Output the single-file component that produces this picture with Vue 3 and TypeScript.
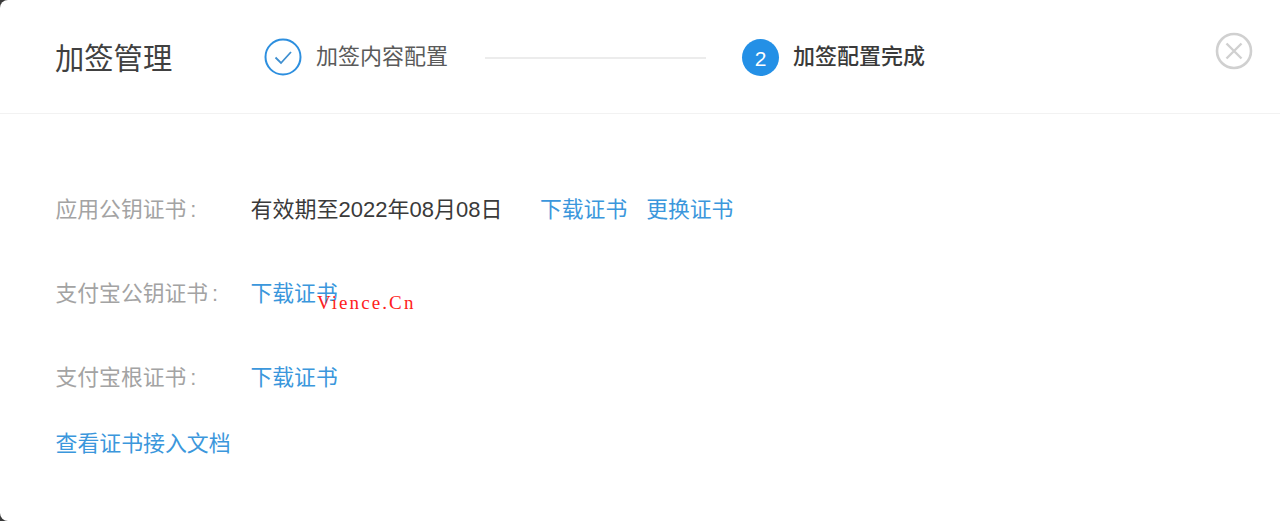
<script setup lang="ts">
const rows = [
  { label: '应用公钥证书', text: '有效期至2022年08月08日', links: ['下载证书', '更换证书'] },
  { label: '支付宝公钥证书', text: '', links: ['下载证书'] },
  { label: '支付宝根证书', text: '', links: ['下载证书'] },
]
</script>

<template>
  <div class="modal">
    <header class="head">
      <h1 class="title">加签管理</h1>
      <div class="steps">
        <div class="step">
          <svg class="ico" width="38" height="38" viewBox="0 0 38 38">
            <circle cx="19" cy="19" r="17.5" fill="none" stroke="#2d8fdf" stroke-width="2" />
            <path d="M11.5 19.5l5.5 5.5 10-11" fill="none" stroke="#3f8fd0" stroke-width="1.8" />
          </svg>
          <span class="step-text">加签内容配置</span>
        </div>
        <div class="line"></div>
        <div class="step">
          <span class="num">2</span>
          <span class="step-text active">加签配置完成</span>
        </div>
      </div>
      <button class="close" aria-label="关闭">
        <svg width="38" height="38" viewBox="0 0 38 38">
          <circle cx="19" cy="19" r="17" fill="none" stroke="#d0d0d0" stroke-width="2.6" />
          <path d="M11.5 11.5l15 15M26.5 11.5l-15 15" fill="none" stroke="#d0d0d0" stroke-width="2.4" />
        </svg>
      </button>
    </header>
    <main class="body">
      <div v-for="r in rows" :key="r.label" class="row">
        <span class="label">{{ r.label }}<span class="colon">:</span></span>
        <span v-if="r.text" class="value">{{ r.text }}</span>
        <a v-for="l in r.links" :key="l" class="link">{{ l }}</a>
      </div>
      <a class="link doc">查看证书接入文档</a>
    </main>
    <span class="mark">Vience.Cn</span>
  </div>
</template>

<style>
html, body { margin: 0; background: #3a3a3a; }
</style>

<style scoped>
.modal {
  position: relative;
  width: 1280px;
  height: 521px;
  overflow: hidden;
  background: #fff;
  border-radius: 8px 0 0 8px;
  font-family: "Liberation Sans", "Noto Sans CJK SC", sans-serif;
}
.head {
  display: flex;
  align-items: flex-start;
  height: 114px;
  box-sizing: border-box;
  border-bottom: 1px solid #f2f2f2;
  padding-left: 55px;
}
.title {
  margin: 0;
  width: 209px;
  padding-top: 39px;
  font-size: 29.3px;
  line-height: 40px;
  font-weight: 400;
  color: #404040;
}
.steps {
  display: flex;
  align-items: center;
  height: 38px;
  margin-top: 38px;
}
.step { display: flex; align-items: center; gap: 14px; }
.ico { flex: none; }
.step-text { font-size: 22px; line-height: 38px; height: 38px; color: #5a5a5a; }
.step-text.active { color: #3a3a3a; font-weight: 500; }
.line { width: 221px; height: 2px; background: #ececec; margin: 1px 36px 0 37px; }
.num {
  width: 37px;
  height: 37px;
  border-radius: 50%;
  background: #2490e6;
  color: #fff;
  font: 21px/40px "Liberation Sans", sans-serif;
  text-align: center;
}
.close {
  margin: 32px 27px 0 auto;
  padding: 0;
  border: 0;
  background: none;
  height: 38px;
  line-height: 0;
}
.body { padding: 73px 0 0 55px; }
.row {
  display: flex;
  align-items: center;
  height: 40px;
  margin-bottom: 44px;
  font-size: 21.8px;
}
.label { width: 195.5px; padding-left: 0.5px; margin-right: -0.5px; color: #a3a3a3; }
.colon { margin-left: 4px; }
.value { width: 289.5px; font-size: 22px; color: #3a3a3a; }
.link { color: #3b97dc; margin-right: 19px; }
.doc { display: block; margin: -15px 0 0; padding-left: 0.5px; font-size: 21.9px; line-height: 40px; }
.mark {
  position: absolute;
  left: 317px;
  top: 292px;
  font: 19px/22px "Liberation Serif", serif;
  letter-spacing: 2.1px;
  color: #ff2020;
}
</style>
